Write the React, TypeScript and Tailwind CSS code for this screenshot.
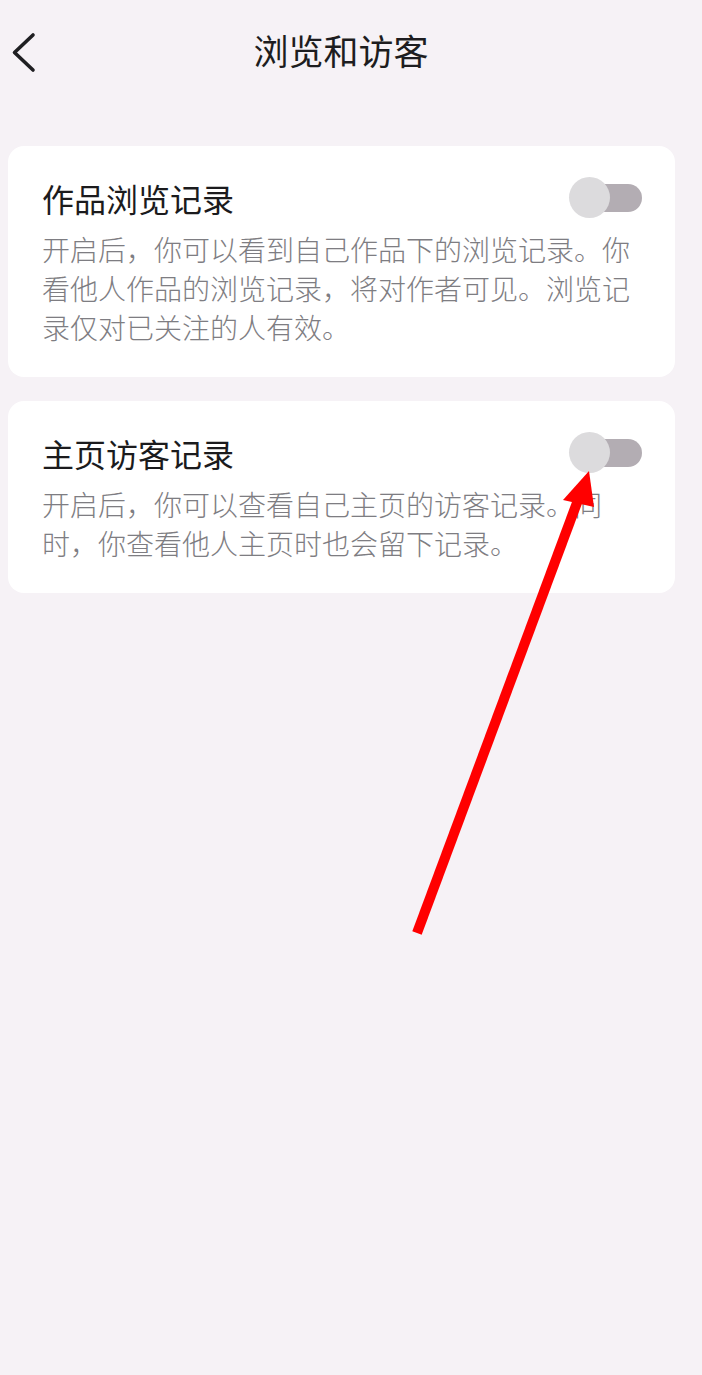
type Setting = {
  id: number;
  title: string;
  desc: string;
};

const settings: Setting[] = [
  {
    id: 1,
    title: "作品浏览记录",
    desc: "开启后，你可以看到自己作品下的浏览记录。你看他人作品的浏览记录，将对作者可见。浏览记录仅对已关注的人有效。",
  },
  {
    id: 2,
    title: "主页访客记录",
    desc: "开启后，你可以查看自己主页的访客记录。同时，你查看他人主页时也会留下记录。",
  },
];

const BackIcon = () => (
  <svg width="40" height="80" viewBox="0 0 40 80" fill="none">
    <polyline
      points="33,35 14.5,52.5 33,70"
      stroke="#1f1f22"
      strokeWidth="3.6"
      strokeLinecap="round"
      strokeLinejoin="round"
    />
  </svg>
);

const Toggle = () => (
  <div className="relative w-[74px] h-[42px] shrink-0">
    <div className="absolute left-[10px] right-[1px] top-[7px] h-[28px] rounded-full bg-[#b3adb3]" />
    <div className="absolute left-0 top-0 w-[41px] h-[41px] rounded-full bg-[#dcdbdd]" />
  </div>
);

const Arrow = () => (
  <svg
    className="absolute left-0 top-0 pointer-events-none"
    width="702"
    height="1375"
    viewBox="0 0 702 1375"
  >
    <line x1="417" y1="933" x2="578" y2="500" stroke="#ff0000" strokeWidth="10" />
    <polygon points="589,471 563,500 594,507" fill="#ff0000" />
  </svg>
);

const App = () => {
  return (
    <div
      className="relative min-h-[1375px] w-full bg-[#f6f2f6] text-[#1b1b1d]"
      style={{ fontFamily: '"Noto Sans CJK SC", "Noto Sans", sans-serif' }}
    >
      <header className="relative h-[106px] flex items-center justify-center pr-[20px] pb-[8px]">
        <button className="absolute left-0 top-0">
          <BackIcon />
        </button>
        <h1 className="text-[35px] font-normal leading-none text-[#1d1d20]">浏览和访客</h1>
      </header>

      <main className="mt-[40px] px-[8px] pr-[27px] flex flex-col gap-[24px]">
        {settings.map(({ id, title, desc }) => (
          <section key={id} className="bg-white rounded-[16px] pl-[34px] pr-[32px] pt-[31px] pb-[30px]">
            <div className="flex items-center justify-between">
              <h2 className="text-[32px] leading-[42px]">{title}</h2>
              <Toggle />
            </div>
            <p className="mt-[11px] text-[28px] font-light leading-[39px] text-[#7e7d82]">{desc}</p>
          </section>
        ))}
      </main>

      <Arrow />
    </div>
  );
};

export default App;
